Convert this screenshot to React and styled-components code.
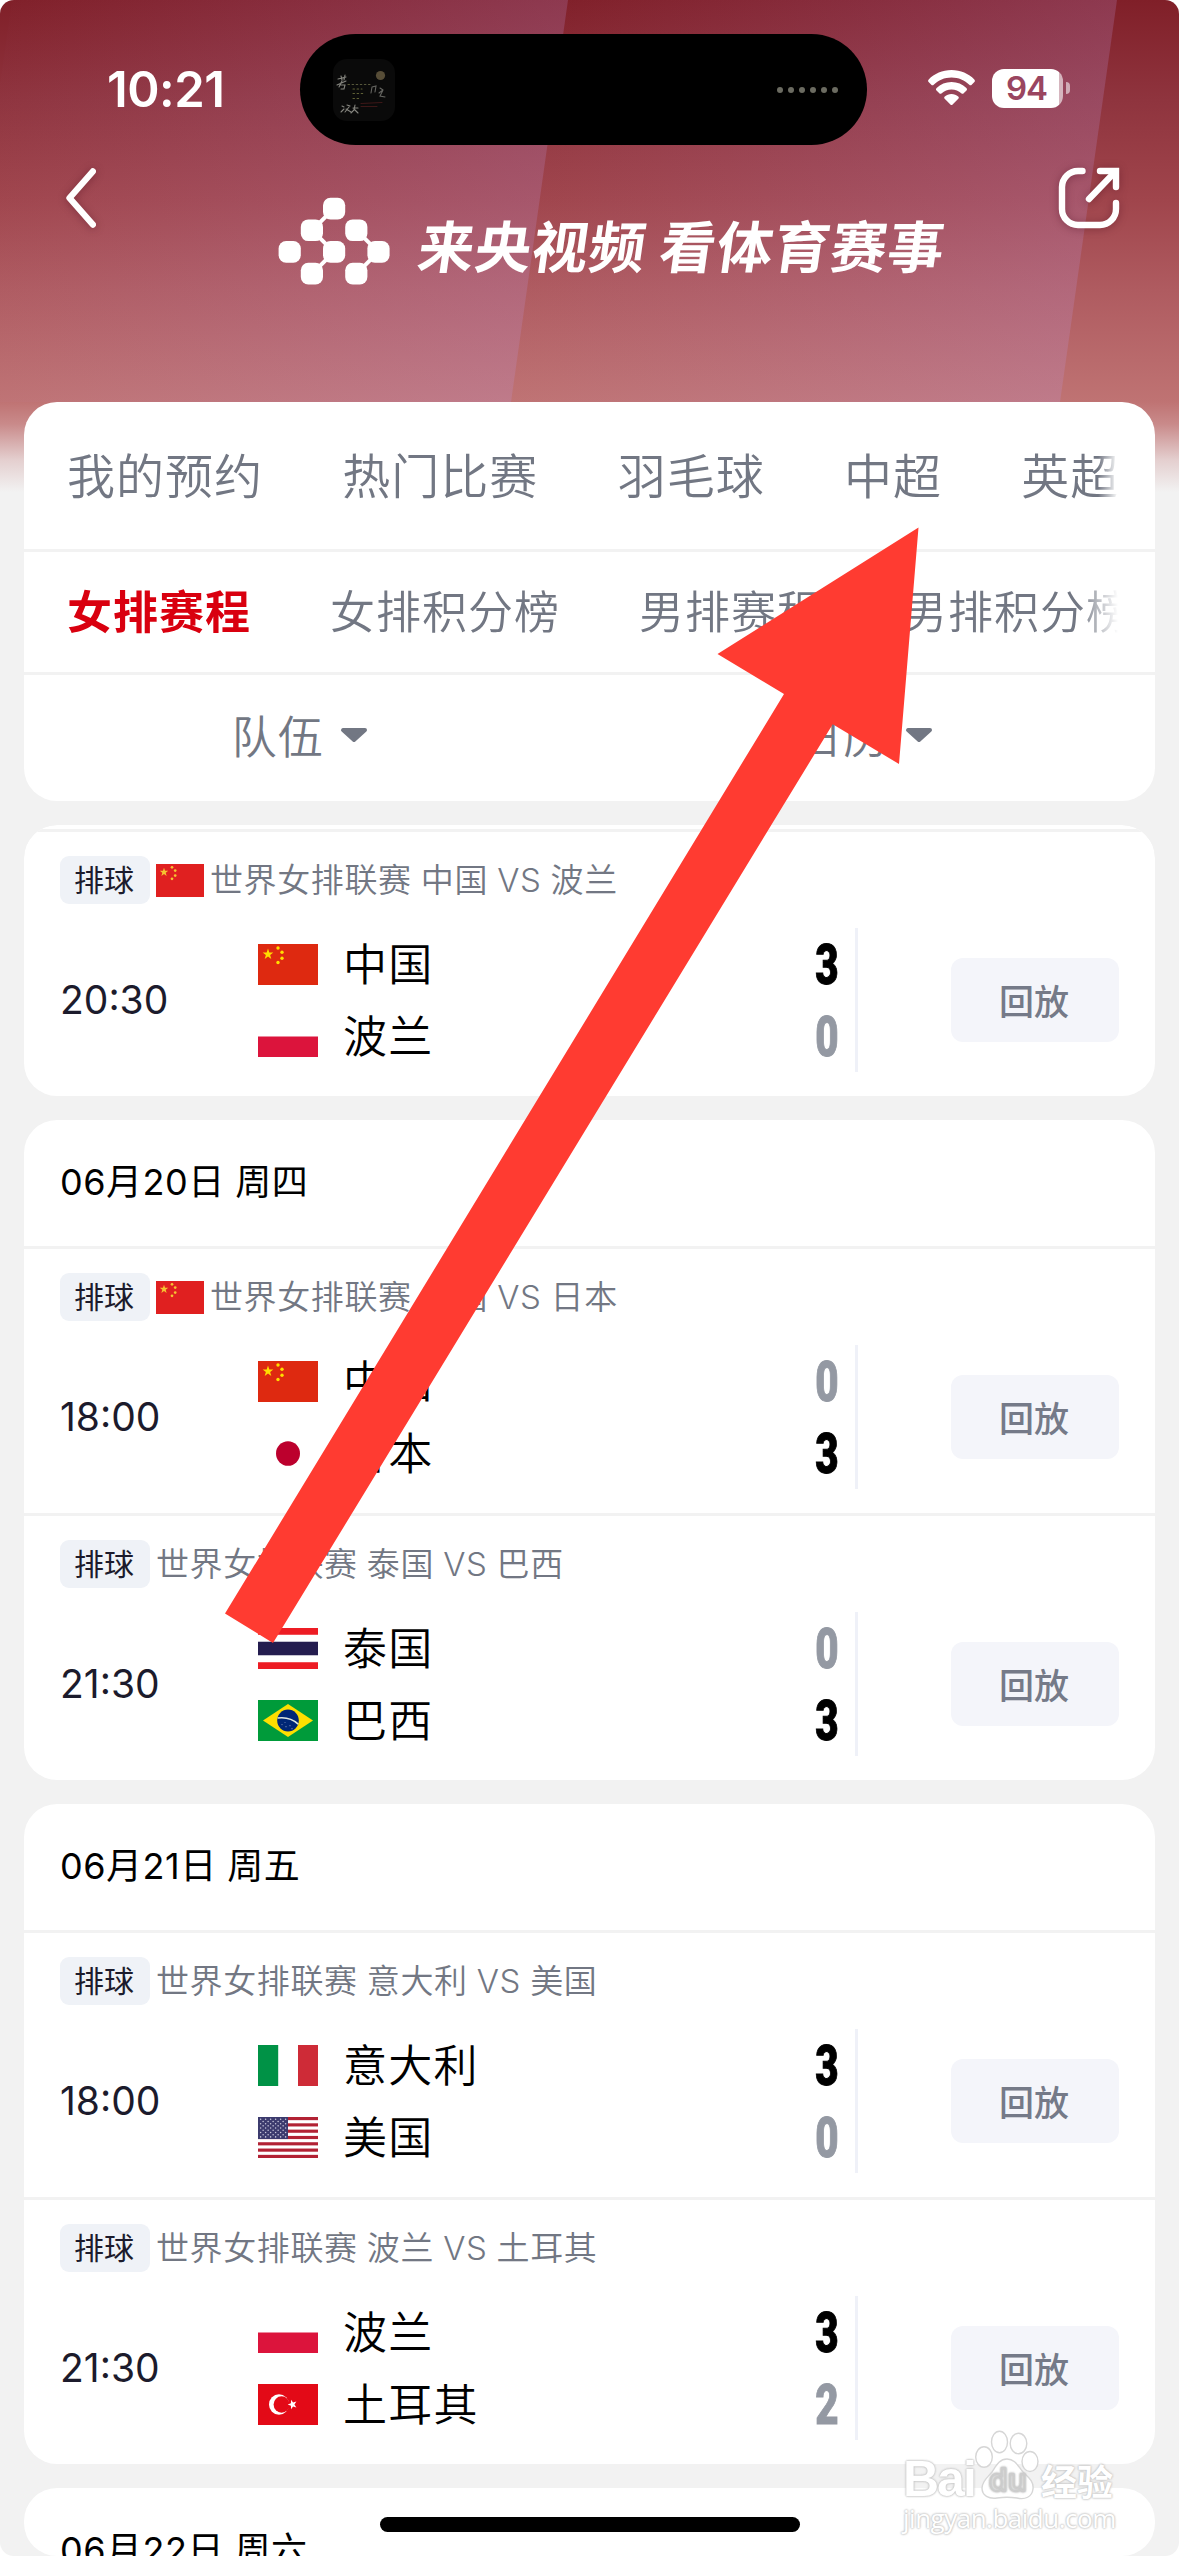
import React from 'react';
import styled, { createGlobalStyle, css } from 'styled-components';

const GlobalStyle = createGlobalStyle`
  *, *::before, *::after { box-sizing: border-box; }
  html, body { margin: 0; padding: 0; background: #fff; }
  body { width: 1179px; height: 2556px; overflow: hidden; }
`;

const latin = `Inter, "Noto Sans CJK SC", sans-serif`;

const Screen = styled.div`
  position: relative;
  display: flex;
  flex-direction: column;
  width: 1179px;
  height: 2556px;
  overflow: hidden;
  border-radius: 14px;
  background: linear-gradient(
      to bottom,
      #801f28 0,
      #8f343e 100px,
      #a0454c 200px,
      #af5b60 290px,
      #bf7373 402px,
      #c98a8a 424px,
      #e4cfcf 460px,
      #f2f2f2 492px
    ) #f2f2f2;
  font-family: ${latin};
  color: #000;
`;

const Band = styled.div`
  position: absolute;
  top: 0;
  left: ${(p) => p.$left}px;
  width: ${(p) => p.$width}px;
  height: 402px;
  clip-path: polygon(57px 0, 100% 0, calc(100% - 57px) 100%, 0 100%);
  background: linear-gradient(97deg, rgba(190, 150, 220, 0) 4%, rgba(190, 150, 220, 0.23) 96%);
`;

const StatusBar = styled.header`
  position: relative;
  display: flex;
  align-items: center;
  height: 145px;
  padding: 34px 0 0 107px;
`;

const Clock = styled.time`
  width: 193px;
  font-size: 49px;
  line-height: 48px;
  font-weight: 600;
  letter-spacing: -0.5px;
  color: #fff;
`;

const Island = styled.div`
  display: flex;
  align-items: center;
  justify-content: space-between;
  width: 567px;
  height: 111px;
  padding: 0 29px 0 33px;
  border-radius: 56px;
  background: #000;
`;

const Album = styled.svg`
  width: 62px;
  height: 62px;
  border-radius: 14px;
  background: #0a0a0a;
`;

const Dots = styled.div`
  display: flex;
  gap: 5px;
  i {
    width: 6px;
    height: 6px;
    border-radius: 50%;
    background: #6b6b61;
  }
`;

const WifiIcon = styled.svg`
  width: 47px;
  height: 36px;
  margin-left: 61px;
  margin-top: -3px;
`;

const Battery = styled.div`
  display: flex;
  align-items: center;
  justify-content: center;
  width: 71px;
  height: 39px;
  margin: -3px 0 0 17px;
  padding-right: 2px;
  border-radius: 12px;
  background: linear-gradient(to right, #fff 67px, rgba(255, 255, 255, 0.6) 67px);
  color: #9a4560;
  font-size: 33px;
  line-height: 39px;
  font-weight: 600;
  letter-spacing: -1px;
`;

const BatteryTip = styled.span`
  width: 4px;
  height: 12px;
  margin: -3px 0 0 3px;
  border-radius: 0 4px 4px 0;
  background: rgba(255, 255, 255, 0.55);
`;

const NavBar = styled.nav`
  position: relative;
  display: flex;
  justify-content: space-between;
  align-items: flex-start;
  height: 257px;
  padding: 20px 57px 0 63px;
`;

const NavIcon = styled.svg`
  width: ${(p) => p.$w}px;
  height: 66px;
  overflow: visible;
  filter: drop-shadow(0 1px 4px rgba(60, 0, 20, 0.35));
  fill: none;
  stroke: #fff;
  stroke-width: 6.4;
`;

const Brand = styled.div`
  display: flex;
  align-items: center;
  flex: 1;
  padding: 31px 0 0 179px;
`;

const BrandLogo = styled.svg`
  width: 112px;
  height: 88px;
`;

const Slogan = styled.h1`
  margin: 6px 0 0 29px;
  font-family: "Noto Sans CJK SC", sans-serif;
  font-size: 56px;
  line-height: 84px;
  font-weight: 700;
  letter-spacing: 1px;
  white-space: nowrap;
  color: #fff;
  transform: skewX(-8deg);
`;

const Card = styled.section`
  flex: none;
  border-radius: 33px;
  background: #fff;
  overflow: hidden;
`;

const FilterCard = styled(Card)`
  position: relative;
  margin: 0 24px;
  height: 399px;
`;

const TabRow = styled.div`
  display: flex;
  align-items: center;
  gap: ${(p) => p.$gap}px;
  height: ${(p) => p.$height}px;
  margin: 0 37px 0 43px;
  padding-top: 2px;
  overflow: hidden;
  font-size: ${(p) => p.$size}px;
  letter-spacing: 1px;
  mask-image: linear-gradient(to right, #000 calc(100% - ${(p) => p.$fade}px), transparent 100%);
`;

const Tab = styled.span`
  flex: none;
  line-height: 70px;
  white-space: nowrap;
  font-weight: 350;
  color: #727783;
  ${(p) =>
    p.$active &&
    css`
      font-weight: 700;
      color: #d9000f;
    `}
`;

const Divider = styled.hr`
  height: 3px;
  margin: 0;
  border: 0;
  background: #f2f2f2;
`;

const Filters = styled.div`
  display: grid;
  grid-template-columns: 1fr 1fr;
  height: 126px;
`;

const Filter = styled.div`
  display: flex;
  align-items: center;
  justify-content: center;
  gap: 6px;
  padding: 0 4px 8px 0;
  font-size: 45px;
  letter-spacing: 1px;
  font-weight: 350;
  color: #727783;
  svg {
    width: 48px;
    height: 18px;
    margin-top: 2px;
    fill: #727783;
    stroke: #727783;
    stroke-width: 4;
    stroke-linejoin: round;
  }
`;

const List = styled.main`
  position: relative;
  display: flex;
  flex-direction: column;
  gap: 24px;
  flex: 1;
  min-height: 0;
  margin: 24px 24px 0;
  border-radius: 33px;
  overflow: hidden;
`;

const ScrolledEdge = styled.div`
  height: 4px;
`;

const DateHeader = styled.h2`
  height: 126px;
  margin: 0;
  padding: 0 36px;
  font-size: 36px;
  line-height: 125px;
  font-weight: 370;
  letter-spacing: 0.5px;
  white-space: nowrap;
`;

const Match = styled.article`
  display: flex;
  flex-direction: column;
  gap: 24px;
  height: 264px;
  padding: 24px 36px;
`;

const MatchTitle = styled.div`
  display: flex;
  align-items: center;
  height: 48px;
  gap: 6px;
`;

const Tag = styled.span`
  width: 90px;
  height: 48px;
  padding-right: 2px;
  border-radius: 9px;
  background: #eff2f7;
  font-size: 30px;
  line-height: 48px;
  font-weight: 370;
  text-align: center;
  color: #1c1b2c;
`;

const Caption = styled.span`
  font-size: 33px;
  line-height: 48px;
  font-weight: 350;
  letter-spacing: 0.6px;
  word-spacing: -0.7px;
  white-space: nowrap;
  color: #727783;
`;

const MatchBody = styled.div`
  display: grid;
  grid-template-columns: 198px 597px 3px 1fr;
  align-items: center;
  height: 144px;
`;

const Kickoff = styled.time`
  font-size: 39px;
  line-height: 48px;
  color: #1c1b2c;
`;

const Teams = styled.div`
  display: grid;
  grid-template-rows: 72px 72px;
`;

const Team = styled.div`
  display: flex;
  align-items: center;
  padding-right: 16px;
`;

const TeamName = styled.span`
  flex: 1;
  margin: 2px 0 0 25px;
  font-size: 44px;
  line-height: 68px;
  font-weight: 350;
  letter-spacing: 1.2px;
`;

const Score = styled.span`
  width: 24px;
  display: flex;
  justify-content: center;
  margin-top: 3px;
  font-family: Roboto, sans-serif;
  font-size: 56px;
  line-height: 69px;
  font-weight: 900;
  color: ${(p) => (p.$win ? '#000' : '#9499a3')};
  -webkit-text-stroke: 1px currentColor;
  transform: scaleX(0.72);
`;

const Rule = styled.div`
  height: 144px;
  background: #eff1f8;
`;

const ReplayButton = styled.button`
  justify-self: end;
  width: 168px;
  height: 84px;
  padding: 0 2px 1px 0;
  border: 0;
  border-radius: 12px;
  background: #f4f5fa;
  font-family: "Noto Sans CJK SC", sans-serif;
  font-size: 35px;
  line-height: 80px;
  font-weight: 500;
  color: #757a88;
`;

const FlagSvg = styled.svg`
  flex: none;
  display: block;
  width: ${(p) => p.$w}px;
  height: ${(p) => p.$h}px;
`;

const Pointer = styled.svg`
  position: absolute;
  left: 224px;
  top: 527px;
  width: 696px;
  height: 1118px;
  fill: #ff3b31;
`;

const HomeIndicator = styled.div`
  position: absolute;
  left: 380px;
  bottom: 24px;
  width: 420px;
  height: 15px;
  border-radius: 8px;
  background: #000;
`;

const Watermark = styled.div`
  position: absolute;
  left: 903px;
  top: 2426px;
  width: 216px;
  display: flex;
  flex-direction: column;
  color: #fff;
  text-shadow: 0 0 2px #c4c4c4, 0 0 2px #c4c4c4, 0 0 3px #d4d4d4;
`;

const WatermarkTop = styled.div`
  display: flex;
  align-items: flex-end;
  height: 74px;
`;

const WatermarkLatin = styled.span`
  width: 73px;
  font-family: "Liberation Sans", sans-serif;
  font-size: 50px;
  line-height: 44px;
  font-weight: 700;
  letter-spacing: -2px;
  margin-bottom: -1px;
`;

const WatermarkHan = styled.span`
  margin-left: 3px;
  font-family: "Noto Sans CJK SC", sans-serif;
  font-size: 36px;
  line-height: 40px;
  font-weight: 700;
`;

const WatermarkUrl = styled.span`
  font-family: "Open Sans", sans-serif;
  font-size: 26px;
  line-height: 30px;
  letter-spacing: -0.5px;
  margin-top: 3px;
`;

const Paw = styled.svg`
  width: 62px;
  height: 72px;
  overflow: visible;
  fill: #fff;
  stroke: #d6d6d6;
  stroke-width: 1.4;
  font-family: "Open Sans", sans-serif;
`;

const starPoints = (cx, cy, r) =>
  Array.from({ length: 10 }, (_, i) => {
    const radius = i % 2 ? r * 0.4 : r;
    const a = (Math.PI / 5) * i - Math.PI / 2;
    return `${(cx + radius * Math.cos(a)).toFixed(2)},${(cy + radius * Math.sin(a)).toFixed(2)}`;
  }).join(' ');

const China = ({ red = '#de2910', star = '#ffde00' }) => (
  <>
    <rect width="60" height="40" fill={red} />
    <g fill={star}>
      <polygon points={starPoints(10, 10, 5.6)} />
      <circle cx="20" cy="4" r="1.7" />
      <circle cx="24" cy="8" r="1.7" />
      <circle cx="24" cy="14" r="1.7" />
      <circle cx="20" cy="18" r="1.7" />
    </g>
  </>
);

const flagArt = {
  cn: <China />,
  cnSmall: <China red="#e02020" star="#f5c431" />,
  pl: (
    <>
      <rect width="60" height="40" fill="#fff" />
      <rect y="20" width="60" height="20" fill="#dc143c" />
    </>
  ),
  jp: (
    <>
      <rect width="60" height="40" fill="#fff" />
      <circle cx="30" cy="20" r="12" fill="#bc002d" />
    </>
  ),
  th: (
    <>
      <rect width="60" height="40" fill="#fff" />
      <rect width="60" height="6.6" fill="#ed1c24" />
      <rect y="13.4" width="60" height="13.2" fill="#241d4f" />
      <rect y="33.4" width="60" height="6.6" fill="#ed1c24" />
    </>
  ),
  br: (
    <>
      <rect width="60" height="40" fill="#009b3a" />
      <path d="M30 4 55 20 30 36 5 20Z" fill="#fedf00" />
      <circle cx="30" cy="20" r="10.8" fill="#002776" />
      <path d="M19.6 17.6Q32 16 40.2 23.6" fill="none" stroke="#dfe9df" strokeWidth="1.6" />
      <g fill="#7f93bb">
        <circle cx="24" cy="24" r=".6" />
        <circle cx="28" cy="26" r=".6" />
        <circle cx="32" cy="25" r=".6" />
        <circle cx="34" cy="28" r=".6" />
        <circle cx="27" cy="22" r=".5" />
      </g>
    </>
  ),
  it: (
    <>
      <rect width="60" height="40" fill="#fff" />
      <rect width="20.2" height="40" fill="#009246" />
      <rect x="40" width="20" height="40" fill="#ce2b37" />
    </>
  ),
  us: (
    <>
      <rect width="60" height="40" fill="#fff" />
      {Array.from({ length: 7 }, (_, i) => (
        <rect key={i} y={(i * 80) / 13} width="60" height={40 / 13} fill="#b22234" />
      ))}
      <rect width="30" height="21.5" fill="#3c3b6e" />
      <g fill="#c9c9dc">
        {Array.from({ length: 9 }, (_, r) =>
          Array.from({ length: r % 2 ? 5 : 6 }, (_, c) => (
            <circle key={`${r}-${c}`} cx={2.6 + c * 5 + (r % 2 ? 2.5 : 0)} cy={2.2 + r * 2.15} r="0.75" />
          ))
        )}
      </g>
    </>
  ),
  tr: (
    <>
      <rect width="60" height="40" fill="#e30a17" />
      <circle cx="21" cy="20" r="10" fill="#fff" />
      <circle cx="23.6" cy="20" r="8" fill="#e30a17" />
      <polygon points={starPoints(0, 0, 4.8)} fill="#fff" transform="translate(34.5 20) rotate(-90)" />
    </>
  ),
};

const Flag = ({ code, w = 60, h = 41 }) => (
  <FlagSvg $w={w} $h={h} viewBox="0 0 60 40" preserveAspectRatio="none">
    {flagArt[code]}
  </FlagSvg>
);

const days = [
  {
    matches: [
      { time: '20:30', flagged: true, home: ['cn', '中国', 3], away: ['pl', '波兰', 0] },
    ],
  },
  {
    date: '06月20日 周四',
    matches: [
      { time: '18:00', flagged: true, home: ['cn', '中国', 0], away: ['jp', '日本', 3] },
      { time: '21:30', home: ['th', '泰国', 0], away: ['br', '巴西', 3] },
    ],
  },
  {
    date: '06月21日 周五',
    matches: [
      { time: '18:00', home: ['it', '意大利', 3], away: ['us', '美国', 0] },
      { time: '21:30', home: ['pl', '波兰', 3], away: ['tr', '土耳其', 2] },
    ],
  },
  { date: '06月22日 周六', matches: [] },
];

const TeamLine = ({ team: [code, name, score], win }) => (
  <Team>
    <Flag code={code} />
    <TeamName>{name}</TeamName>
    <Score $win={win}>{score}</Score>
  </Team>
);

const MatchRow = ({ match: { time, flagged, home, away } }) => (
  <>
    <Divider />
    <Match>
      <MatchTitle>
        <Tag>排球</Tag>
        {flagged && <Flag code="cnSmall" w={48} h={33} />}
        <Caption>{`世界女排联赛 ${home[1]} VS ${away[1]}`}</Caption>
      </MatchTitle>
      <MatchBody>
        <Kickoff>{time}</Kickoff>
        <Teams>
          <TeamLine team={home} win={home[2] > away[2]} />
          <TeamLine team={away} win={away[2] > home[2]} />
        </Teams>
        <Rule />
        <ReplayButton>回放</ReplayButton>
      </MatchBody>
    </Match>
  </>
);

const Caret = () => (
  <svg viewBox="0 0 48 18">
    <path d="M13 4H35L24 14Z" />
  </svg>
);

const logoCells = [[2, 0], [1, 1], [3, 1], [0, 2], [2, 2], [4, 2], [1, 3], [3, 3]];
const logoJoints = [[2, 1, 1], [2, 2, -1], [2, 3, 1], [4, 2, -1], [4, 3, 1]];

export default function App() {
  return (
    <>
      <GlobalStyle />
      <Screen>
        <Band $left={-45} $width={613} />
        <Band $left={511} $width={606} />
        <StatusBar>
          <Clock>10:21</Clock>
          <Island>
            <Album viewBox="0 0 62 62" fill="none" strokeWidth="1.1" strokeLinecap="round">
              <circle cx="47.5" cy="16.5" r="4.6" fill="#574d37" />
              <path d="M5 20l8-2M8 17l1 4M12 16l-1 5M4 26l9-4M9 22l-3 6M8 26h4l-1 4H8" stroke="#85857f" />
              <path d="M39 28l-1 6M39 28l4-1-1 6M47 29l3 2M46 34l4-3-3 6 5 1" stroke="#666662" />
              <path d="M9 47l2 1M8 53l3-3M14 46l3 1M13 50l5 3M16 48l-4 5M20 49h5M22 46l-1 5-3 3M21 50l4 4" stroke="#85857f" />
              <path d="M15 25.500h22" stroke="#56573b" strokeDasharray="1.500 2.600" />
              <path d="M20 30h9M20 34.500h11M20 39.500h8" stroke="#5f6036" strokeDasharray="1.500 2.600" />
              <path d="M28 44.500l21-1M28 47.500h16" stroke="#3d1717" />
            </Album>
            <Dots>
              <i /><i /><i /><i /><i /><i />
            </Dots>
          </Island>
          <WifiIcon viewBox="0 0 47 36" fill="#fff">
            <path d="M23.500 0C32.600 0 40.700 3.600 46.300 9.400c.8.800.8 1.900.1 2.600l-2.700 2.700c-.7.700-1.700.7-2.400 0C36.700 10.200 30.500 7.400 23.500 7.400S10.300 10.200 5.700 14.700c-.7.700-1.700.7-2.400 0L.6 12c-.7-.7-.7-1.800.1-2.600C6.300 3.600 14.400 0 23.500 0Z" />
            <path d="M23.500 12c5.800 0 11 2.200 14.900 5.900.8.800.8 1.800.1 2.500l-2.800 2.800c-.7.700-1.600.7-2.400 0-2.600-2.400-6-3.800-9.800-3.800s-7.200 1.400-9.800 3.800c-.8.700-1.700.7-2.400 0l-2.800-2.800c-.7-.7-.7-1.700.1-2.500C12.500 14.200 17.700 12 23.500 12Z" />
            <path d="M23.500 24c2.600 0 4.900.9 6.700 2.400.8.700.8 1.700.1 2.400l-5.700 5.700c-.7.700-1.500.7-2.200 0l-5.700-5.700c-.7-.7-.7-1.700.1-2.400 1.800-1.500 4.100-2.400 6.700-2.400Z" />
          </WifiIcon>
          <Battery>94</Battery>
          <BatteryTip />
        </StatusBar>
        <NavBar>
          <NavIcon $w={36} viewBox="0 0 36 66" strokeLinecap="round" strokeLinejoin="round">
            <path d="M29.800 6.500 6.500 33l23.300 26.500" />
          </NavIcon>
          <Brand>
            <BrandLogo viewBox="0 0 112 88" fill="#fff">
              {logoCells.map(([c, r]) => (
                <rect key={`${c}${r}`} x={0.6 + c * 22.2} y={0.7 + r * 21.7} width="22.2" height="21.7" rx="7.5" />
              ))}
              <g stroke="#fff" strokeWidth="4">
                {logoJoints.map(([c, r, d]) => {
                  const x = 0.6 + c * 22.2;
                  const y = 0.7 + r * 21.7;
                  return <path key={`${c}${r}`} d={`M${x - 3.5} ${y + 3.5 * d}L${x + 3.5} ${y - 3.5 * d}`} />;
                })}
              </g>
            </BrandLogo>
            <Slogan>来央视频 看体育赛事</Slogan>
          </Brand>
          <NavIcon $w={66} viewBox="0 0 66 66" strokeLinecap="round">
            <path d="M26.500 6H22A16 16 0 0 0 6 22V44A16 16 0 0 0 22 60H44A16 16 0 0 0 60 44V38" />
            <path d="M44 6H60V22" />
            <path d="M33 34 58 8" />
          </NavIcon>
        </NavBar>
        <FilterCard>
          <TabRow $height={147} $size={48} $gap={79.3} $fade={20}>
            <Tab>我的预约</Tab>
            <Tab>热门比赛</Tab>
            <Tab>羽毛球</Tab>
            <Tab>中超</Tab>
            <Tab>英超</Tab>
          </TabRow>
          <Divider />
          <TabRow $height={120} $size={45} $gap={79} $fade={40}>
            <Tab $active>女排赛程</Tab>
            <Tab>女排积分榜</Tab>
            <Tab>男排赛程</Tab>
            <Tab>男排积分榜</Tab>
          </TabRow>
          <Divider />
          <Filters>
            <Filter>队伍<Caret /></Filter>
            <Filter>日历<Caret /></Filter>
          </Filters>
        </FilterCard>
        <List>
          {days.map((day, i) => (
            <Card key={i}>
              {day.date ? <DateHeader>{day.date}</DateHeader> : <ScrolledEdge />}
              {day.matches.map((m) => (
                <MatchRow key={m.time} match={m} />
              ))}
            </Card>
          ))}
        </List>
        <Pointer viewBox="224 527 696 1118">
          <path d="M918.500 527.500 899 764 832.700 724.300 273 1643 225 1613.600 784 694 717.500 654Z" />
        </Pointer>
        <Watermark>
          <WatermarkTop>
            <WatermarkLatin>Bai</WatermarkLatin>
            <Paw viewBox="0 0 62 72">
              <ellipse cx="8" cy="29" rx="8.3" ry="10.3" />
              <ellipse cx="23.500" cy="14" rx="8" ry="10.8" />
              <ellipse cx="42.500" cy="15.500" rx="8.3" ry="10.3" />
              <ellipse cx="54" cy="33.500" rx="8" ry="10" />
              <path d="M31 31c8 0 11 7 16 13 5 5 11 9 10 17-1 8-8 11-16 9-7-1-13-1-20 0-8 1-15-2-15-10 0-7 6-11 10-16 4-6 7-13 15-13Z" />
              <text x="13" y="63" fontSize="30" fontWeight="600" stroke="#cdcdcd">du</text>
            </Paw>
            <WatermarkHan>经验</WatermarkHan>
          </WatermarkTop>
          <WatermarkUrl>jingyan.baidu.com</WatermarkUrl>
        </Watermark>
        <HomeIndicator />
      </Screen>
    </>
  );
}
